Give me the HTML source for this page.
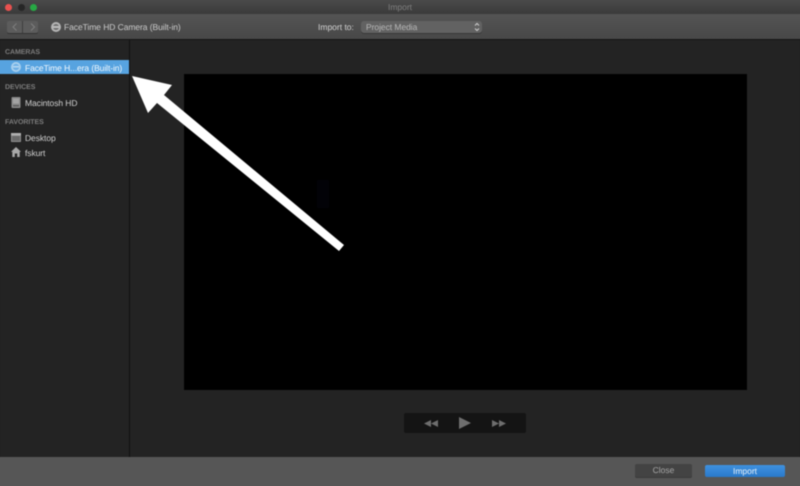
<!DOCTYPE html>
<html><head><meta charset="utf-8">
<style>
html,body{margin:0;padding:0;background:#232323;width:800px;height:486px;overflow:hidden}
#p{position:relative;width:800px;height:486px;background:#232323;font-family:"Liberation Sans",sans-serif;filter:blur(.4px);text-rendering:geometricPrecision}
.a{position:absolute;white-space:nowrap}
.sec{font-size:7px;font-weight:bold;color:#7d7d7d;left:5px;line-height:10px;letter-spacing:-.05px}
.it{font-size:8.5px;color:#cfcfcf;left:25px;line-height:12px;letter-spacing:-.08px}
</style></head><body><div id="p">
<div class="a" style="left:-6px;top:-6px;width:812px;height:20px;background:linear-gradient(#4a4a4a 30%,#3a3a3a)"></div>
<div class="a" style="left:-6px;top:14px;width:812px;height:25px;background:linear-gradient(#545454,#484848)"></div>
<div class="a" style="left:-6px;top:39px;width:812px;height:1px;background:#151515"></div>
<div class="a" style="left:4.500px;top:3.500px;width:7.500px;height:7.500px;border-radius:50%;background:#e9514f"></div>
<div class="a" style="left:17.500px;top:3.500px;width:7.500px;height:7.500px;border-radius:50%;background:#262626"></div>
<div class="a" style="left:29.500px;top:3.500px;width:7.500px;height:7.500px;border-radius:50%;background:#27a844"></div>
<div class="a" style="left:0;width:800px;top:2px;text-align:center;font-size:8.5px;line-height:11px;color:#7f7f7f">Import</div>

<div class="a" style="left:7px;top:21px;width:31px;height:12px;border-radius:2px;background:#5c5c5c;box-shadow:0 1px 0 #333"></div>
<div class="a" style="left:22px;top:21px;width:1px;height:12px;background:#3e3e3e"></div>
<svg class="a" style="left:7px;top:21px" width="32" height="12" fill="none" stroke="#7d7d7d" stroke-width="1.1"><path d="M9.500 2.500 6 6l3.500 3.500M24 2.500 27.500 6 24 9.500"/></svg>
<svg class="a" style="left:50px;top:21px" width="12" height="12"><circle cx="6" cy="6" r="5" fill="#b5b5b5"/><circle cx="6" cy="6" r="3" fill="#6d6d6d"/><rect x="3" y="5" width="6" height="2" fill="#bdbdbd"/></svg>
<div class="a" style="left:64px;top:21px;font-size:8.5px;line-height:12px;color:#cacaca;letter-spacing:-.07px">FaceTime HD Camera (Built-in)</div>

<div class="a" style="left:318px;top:21px;font-size:8.5px;line-height:12px;color:#d2d2d2">Import to:</div>
<div class="a" style="left:361px;top:21px;width:121px;height:12px;border-radius:3px;background:#626262;box-shadow:0 1px 0 #383838"></div>
<div class="a" style="left:366px;top:21px;font-size:8.5px;line-height:12px;color:#b8b8b8;letter-spacing:-.05px">Project Media</div>
<svg class="a" style="left:474px;top:22px" width="6" height="10" fill="none" stroke="#cfcfcf" stroke-width="1"><path d="M1 3.500 3 1.500 5 3.500M1 6.500 3 8.500 5 6.500"/></svg>

<div class="a" style="left:129px;top:40px;width:1px;height:417px;background:#111"></div>

<div class="a sec" style="top:47.500px">CAMERAS</div>
<div class="a" style="left:-6px;top:60px;width:135px;height:14px;background:#57a3e0"></div>
<svg class="a" style="left:10px;top:61px" width="12" height="12"><circle cx="6" cy="6" r="5" fill="#a9d0ee"/><circle cx="6" cy="6" r="3.200" fill="#6fb0e5"/><rect x="3" y="5" width="6" height="1.500" fill="#b5d8f2"/></svg>
<div class="a it" style="top:62px;color:#f2f8fd">FaceTime H...era (Built-in)</div>

<div class="a sec" style="top:82.500px">DEVICES</div>
<svg class="a" style="left:11px;top:97px" width="10" height="12"><rect x="0.500" y="0" width="9" height="11" rx="1" fill="#8a8a8a"/><rect x="2" y="1.500" width="6" height="5" fill="#a3a3a3"/><rect x="2" y="8" width="6" height="1.500" fill="#5c5c5c"/></svg>
<div class="a it" style="top:97px">Macintosh HD</div>

<div class="a sec" style="top:117.500px">FAVORITES</div>
<svg class="a" style="left:11px;top:133px" width="10" height="9"><rect width="10" height="9" rx=".8" fill="#8d8d8d"/><rect x="0" y="0" width="10" height="2.500" fill="#b0b0b0"/><rect x="1" y="3" width="8" height="5" fill="#6a6a6a"/></svg>
<div class="a it" style="top:132px">Desktop</div>
<svg class="a" style="left:11px;top:147px" width="10" height="10"><path d="M5 0 10 4.800H8.700V10H6.200V6.500H3.800V10H1.300V4.800H0Z" fill="#a8a8a8"/></svg>
<div class="a it" style="top:147px">fskurt</div>

<div class="a" style="left:184px;top:74px;width:563px;height:316px;background:#000"></div>
<div class="a" style="left:317px;top:180px;width:12px;height:28px;background:#020207"></div>

<svg class="a" style="left:0;top:0" width="800" height="486"><path d="M132 76 172 85 164 95 344 245 339 251 157 103 148 113Z" fill="#fff"/></svg>

<div class="a" style="left:404px;top:413px;width:122px;height:20px;border-radius:2px;background:#141414"></div>
<svg class="a" style="left:404px;top:413px" width="122" height="20" fill="#6e6e6e"><path d="M20 10.500 27 7V14ZM27 10.500 34 7V14Z"/><path d="M55 4V16L67 10Z"/><path d="M88 7 95 10.500 88 14ZM95 7 102 10.500 95 14Z"/></svg>

<div class="a" style="left:-6px;top:457px;width:812px;height:36px;background:#565656"></div>
<div class="a" style="left:635px;top:464px;width:57px;height:13px;border-radius:2px;background:#434343;box-shadow:0 1px 0 #3a3a3a;text-align:center;font-size:8.5px;line-height:13px;color:#a6a6a6">Close</div>
<div class="a" style="left:705px;top:465px;width:80px;height:12px;border-radius:2px;background:linear-gradient(#3f92e0,#2a79c9);text-align:center;font-size:8.5px;line-height:12px;color:#e6f0fa">Import</div>
</div></body></html>
